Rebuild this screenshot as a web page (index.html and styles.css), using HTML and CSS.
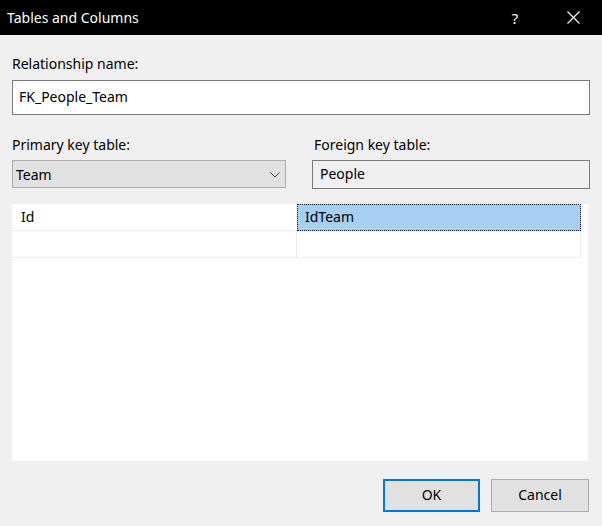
FILE: index.html
```html
<!DOCTYPE html>
<html>
<head>
<meta charset="utf-8">
<link rel="stylesheet" href="styles.css">
</head>
<body>
<div class="dialog">
  <div class="titlebar">
    <span class="title">Tables and Columns</span>
    <span class="help">?</span>
    <span class="close">
      <svg width="13" height="13" viewBox="0 0 13 13"><path d="M0.5 0.5 L12.5 12.5 M12.5 0.5 L0.5 12.5" stroke="#fff" stroke-width="1.1" fill="none"/></svg>
    </span>
  </div>
  <div class="content">
    <div class="label first">Relationship name:</div>
    <div class="textbox">FK_People_Team</div>
    <div class="tables">
      <div class="col">
        <div class="label">Primary key table:</div>
        <div class="combo">
          <span>Team</span>
          <svg class="chev" width="10" height="6" viewBox="0 0 10 6"><path d="M0.5 0.5 L5 5 L9.5 0.5" stroke="#444" stroke-width="1" fill="none"/></svg>
        </div>
      </div>
      <div class="col right">
        <div class="label fk">Foreign key table:</div>
        <div class="readonly">People</div>
      </div>
    </div>
    <div class="grid">
      <div class="row">
        <div class="cell c1">Id</div>
        <div class="cell c2 sel">IdTeam</div>
      </div>
      <div class="row">
        <div class="cell c1"></div>
        <div class="cell c2"></div>
      </div>
    </div>
    <div class="buttons">
      <div class="btn ok">OK</div>
      <div class="btn">Cancel</div>
    </div>
  </div>
</div>
</body>
</html>
```

FILE: styles.css
```css
html, body {
  margin: 0;
  padding: 0;
}
body {
  width: 602px;
  height: 526px;
  background: #f0f0f0;
  font-family: "Noto Sans", "Open Sans", sans-serif;
  font-size: 14px;
  color: #000;
  overflow: hidden;
}
.titlebar {
  height: 35px;
  background: #000;
  color: #fff;
  display: flex;
  align-items: center;
}
.title {
  padding-left: 7px;
  flex: 1;
  font-size: 14px;
}
.help {
  width: 14px;
  margin-right: 45px;
  font-size: 15px;
  text-align: center;
}
.close {
  width: 13px;
  height: 13px;
  margin-right: 22px;
  display: flex;
}
.content {
  padding: 0 12px;
}
.label {
  height: 20px;
  line-height: 20px;
}
.label.first {
  margin-top: 19px;
  margin-bottom: 6px;
}
.label.fk {
  padding-left: 2px;
}
.textbox {
  height: 33px;
  border: 1px solid #7a7a7a;
  background: #fff;
  line-height: 31px;
  padding-left: 6px;
}
.tables {
  display: flex;
  margin-top: 20px;
}
.col {
  width: 274px;
}
.col.right {
  margin-left: 26px;
  width: 278px;
}
.col .label {
  margin-bottom: 5px;
}
.combo {
  height: 26px;
  border: 1px solid #adadad;
  background: #e1e1e1;
  display: flex;
  align-items: center;
  justify-content: space-between;
  padding: 0 5px 0 3px;
}
.chev {
  margin-top: 1px;
}
.readonly {
  height: 27px;
  border: 1px solid #7a7a7a;
  background: #f0f0f0;
  line-height: 25px;
  padding-left: 7px;
}
.grid {
  margin-top: 15px;
  height: 257px;
  width: 576px;
  background: #fff;
}
.row {
  display: flex;
  height: 26px;
  border-bottom: 1px solid #ececec;
  width: 569px;
}
.cell {
  height: 26px;
  line-height: 25px;
  box-sizing: border-box;
}
.c1 {
  width: 285px;
  padding-left: 9px;
  border-right: 1px solid #ececec;
}
.row:first-child .c1 {
  border-right: none;
}
.c2 {
  width: 284px;
  padding-left: 7px;
  border-right: 1px solid #ececec;
}
.sel {
  background: #a6cff2;
  border: 1px dotted #000;
  line-height: 24px;
  padding-left: 7px;
  height: 27px;
  margin-bottom: -1px;
  position: relative;
}
.buttons {
  display: flex;
  justify-content: flex-end;
  gap: 11px;
  margin-top: 18px;
  padding-right: 1px;
}
.btn {
  width: 96px;
  height: 31px;
  border: 1px solid #adadad;
  background: #e1e1e1;
  text-align: center;
  line-height: 30px;
}
.btn.ok {
  width: 93px;
  height: 29px;
  border: 2px solid #0078d7;
  line-height: 28px;
}
```
